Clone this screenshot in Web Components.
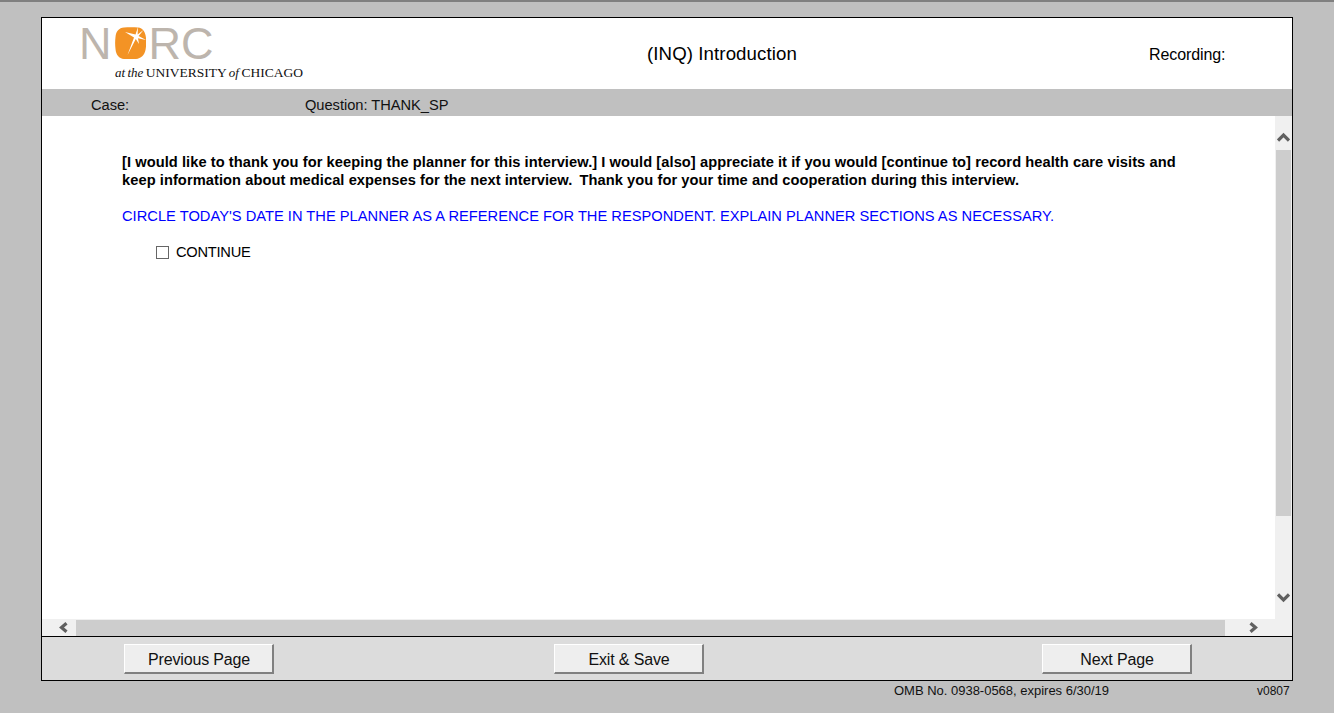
<!DOCTYPE html>
<html lang="en">
<head>
<meta charset="utf-8">
<title>(INQ) Introduction</title>
<style>
    html, body { margin: 0; height: 100%; }
    body {
        background: #c0c0c0;
        font-family: "Liberation Sans", Arial, sans-serif;
        color: #000;
        overflow: hidden;
    }
    .gap { display: inline-block; width: 3px; }
</style>
</head>
<body>
<survey-page>
    <survey-header slot="header" title-text="(INQ) Introduction" recording="Recording:"></survey-header>
    <info-bar slot="info" question="Question: THANK_SP"></info-bar>
    <scroll-pane slot="content">
        <question-text>[I would like to thank you for keeping the planner for this interview.] I would [also] appreciate it if you would [continue to] record health care visits and<br>keep information about medical expenses for the next interview. <span class="gap"></span>Thank you for your time and cooperation during this interview.</question-text>
        <interviewer-note>CIRCLE TODAY'S DATE IN THE PLANNER AS A REFERENCE FOR THE RESPONDENT. EXPLAIN PLANNER SECTIONS AS NECESSARY.</interviewer-note>
        <check-option>CONTINUE</check-option>
    </scroll-pane>
    <nav-footer slot="footer">
        <nav-button style="margin-left: 82px">Previous Page</nav-button>
        <nav-button style="margin-left: 280px">Exit &amp; Save</nav-button>
        <nav-button style="margin-left: 338px">Next Page</nav-button>
    </nav-footer>
    <span slot="omb">OMB No. 0938-0568, expires 6/30/19</span>
    <span slot="version">v0807</span>
</survey-page>

<script>
// page frame: grey backdrop, black bordered box, small print underneath
class SurveyPage extends HTMLElement {
    constructor() {
        super();
        this.attachShadow({ mode: 'open' });
    }

    connectedCallback() {
        this.shadowRoot.innerHTML = `
            <style>
                :host {
                    display: block;
                    height: 713px;
                    box-sizing: border-box;
                    border-top: 2px solid #808080;
                    padding: 15px 41px 0 41px;
                }
                .frame {
                    width: 1252px;
                    height: 664px;
                    box-sizing: border-box;
                    border: 1px solid #000;
                    display: flex;
                    flex-direction: column;
                    background: #fff;
                }
                .small {
                    display: flex;
                    padding-top: 3px;
                    color: #111;
                }
                .omb { margin-left: 853px; width: 363px; font-size: 13px; line-height: 14px; letter-spacing: -0.01px; }
                .ver { font-size: 12px; line-height: 14px; }
            </style>
            <div class="frame">
                <slot name="header"></slot>
                <slot name="info"></slot>
                <slot name="content"></slot>
                <slot name="footer"></slot>
            </div>
            <div class="small">
                <div class="omb"><slot name="omb"></slot></div>
                <div class="ver"><slot name="version"></slot></div>
            </div>
        `;
    }
}

class NorcLogo extends HTMLElement {
    constructor() {
        super();
        this.attachShadow({ mode: 'open' });
    }

    connectedCallback() {
        this.shadowRoot.innerHTML = `
            <style>
                :host { display: block; width: 240px; }
                .mark {
                    display: flex;
                    align-items: flex-start;
                    height: 34px;
                    margin-top: 1px;
                    padding-left: 37px;
                    font-family: "Liberation Sans", sans-serif;
                    font-size: 45px;
                    line-height: 34px;
                    color: #bdb5ad;
                }
                svg { display: block; width: 31px; height: 32px; margin: 0 3px; }
                .sub {
                    margin: 4px 0 0 73px;
                    font-family: "Liberation Serif", serif;
                    font-size: 13.5px;
                    line-height: 15px;
                    color: #111;
                    white-space: nowrap;
                    word-spacing: -0.9px;
                }
                .sub i { font-size: 13px; }
            </style>
            <div class="mark">
                <span>N</span>
                <svg viewBox="0 0 31 32" aria-hidden="true">
                    <path d="M9 0.5 C13 0 19 0 23 0.5 C28 1 30.5 5 31 11 C31.3 15 31.3 19 30.5 23 C29.5 28 26 31.5 21 32 C17 32.3 13 32.3 9 32 C4 31.5 1 28 0.5 22 C0 18 0 14 0.5 10 C1 4 4 1 9 0.5 Z" fill="#f39325"/>
                    <path d="M23 0 L22.6 7.5 L28.5 3 L23.6 9 L31 13 L23 11.3 L24 17 L20.8 12 L12.5 28 L19 10.5 L10 5 L20.5 7.5 Z" fill="#fff"/>
                </svg>
                <span>RC</span>
            </div>
            <div class="sub"><i>at the</i> UNIVERSITY <i>of</i> CHICAGO</div>
        `;
    }
}

class SurveyHeader extends HTMLElement {
    constructor() {
        super();
        this.attachShadow({ mode: 'open' });
    }

    connectedCallback() {
        const title = this.getAttribute('title-text');
        const recording = this.getAttribute('recording');
        this.shadowRoot.innerHTML = `
            <style>
                :host {
                    display: flex;
                    height: 71px;
                    box-sizing: border-box;
                    padding-top: 8px;
                    background: #fff;
                }
                norc-logo { flex: none; }
                .title {
                    width: 150px;
                    margin-left: 365px;
                    padding-top: 17px;
                    font-size: 18.67px;
                    letter-spacing: 0.09px;
                    line-height: 22px;
                    white-space: nowrap;
                }
                .rec {
                    margin-left: 352px;
                    padding-top: 20px;
                    font-size: 16px;
                    letter-spacing: -0.1px;
                    line-height: 18px;
                }
            </style>
            <norc-logo></norc-logo>
            <div class="title">${title}</div>
            <div class="rec">${recording}</div>
        `;
    }
}

class InfoBar extends HTMLElement {
    constructor() {
        super();
        this.attachShadow({ mode: 'open' });
    }

    connectedCallback() {
        this.shadowRoot.innerHTML = `
            <style>
                :host {
                    display: flex;
                    height: 27px;
                    box-sizing: border-box;
                    padding: 8px 0 0 49px;
                    background: #c0c0c0;
                    font-size: 14.67px;
                    letter-spacing: -0.03px;
                    line-height: 17px;
                    color: #111;
                }
                .case { width: 214px; }
            </style>
            <div class="case">Case:</div>
            <div>${this.getAttribute('question')}</div>
        `;
    }
}

// fake scrollbars, they are always drawn in the reference
class ScrollPane extends HTMLElement {
    constructor() {
        super();
        this.attachShadow({ mode: 'open' });
    }

    connectedCallback() {
        this.shadowRoot.innerHTML = `
            <style>
                :host {
                    display: grid;
                    grid-template-columns: 1233px 17px;
                    grid-template-rows: 503px 17px;
                    height: 520px;
                    background: #f0f0f0;
                }
                .body {
                    background: #fff;
                    padding: 37px 80px 0 80px;
                    box-sizing: border-box;
                    overflow: hidden;
                }
                .v {
                    grid-row: 1 / 3;
                    grid-column: 2;
                    position: relative;
                }
                .v .thumb {
                    margin: 34px 1px 0 1px;
                    height: 366px;
                    background: #cdcdcd;
                }
                .h {
                    display: flex;
                    box-sizing: border-box;
                    padding-top: 1px;
                    position: relative;
                }
                .h .thumb {
                    margin-left: 34px;
                    width: 1149px;
                    background: #cdcdcd;
                }
                svg { position: absolute; display: block; }
                .up { left: 2px; top: 16px; }
                .down { left: 2px; top: 477px; }
                .left { left: 16px; top: 3px; }
                .right { left: 1207px; top: 3px; }
            </style>
            <div class="body"><slot></slot></div>
            <div class="v">
                <div class="thumb"></div>
                <svg class="up" width="13" height="10" viewBox="0 0 13 10"><path d="M1 8.5 L6.5 3 L12 8.5" fill="none" stroke="#606060" stroke-width="3.2"/></svg>
                <svg class="down" width="13" height="10" viewBox="0 0 13 10"><path d="M1 1.5 L6.5 7 L12 1.5" fill="none" stroke="#606060" stroke-width="3.2"/></svg>
            </div>
            <div class="h">
                <div class="thumb"></div>
                <svg class="left" width="10" height="11" viewBox="0 0 10 11"><path d="M8.5 1.2 L3.5 5.5 L8.5 9.8" fill="none" stroke="#606060" stroke-width="3.2"/></svg>
                <svg class="right" width="10" height="11" viewBox="0 0 10 11"><path d="M1.5 1.2 L6.5 5.5 L1.5 9.8" fill="none" stroke="#606060" stroke-width="3.2"/></svg>
            </div>
        `;
    }
}

class QuestionText extends HTMLElement {
    constructor() {
        super();
        this.attachShadow({ mode: 'open' });
        this.shadowRoot.innerHTML = `
            <style>
                :host {
                    display: block;
                    font-size: 14.67px;
                    font-weight: bold;
                    letter-spacing: 0.06px;
                    line-height: 18px;
                    margin-bottom: 18px;
                }
            </style>
            <slot></slot>
        `;
    }
}

class InterviewerNote extends HTMLElement {
    constructor() {
        super();
        this.attachShadow({ mode: 'open' });
        this.shadowRoot.innerHTML = `
            <style>
                :host {
                    display: block;
                    font-size: 14.67px;
                    letter-spacing: 0.02px;
                    line-height: 18px;
                    color: #0000ff;
                    white-space: nowrap;
                    margin-bottom: 18px;
                }
            </style>
            <slot></slot>
        `;
    }
}

class CheckOption extends HTMLElement {
    constructor() {
        super();
        this.attachShadow({ mode: 'open' });
        this.shadowRoot.innerHTML = `
            <style>
                :host {
                    display: flex;
                    align-items: center;
                    height: 18px;
                    padding-left: 34px;
                    font-size: 14.67px;
                    letter-spacing: -0.25px;
                    line-height: 18px;
                }
                .box {
                    width: 13px;
                    height: 13px;
                    box-sizing: border-box;
                    border: 1px solid #666;
                    margin-right: 7px;
                    background: #fff;
                }
            </style>
            <span class="box"></span><slot></slot>
        `;
    }
}

class NavFooter extends HTMLElement {
    constructor() {
        super();
        this.attachShadow({ mode: 'open' });
        this.shadowRoot.innerHTML = `
            <style>
                :host {
                    display: flex;
                    align-items: flex-start;
                    box-sizing: border-box;
                    height: 44px;
                    border-top: 1px solid #000;
                    padding-top: 7px;
                    background: #dcdcdc;
                }
            </style>
            <slot></slot>
        `;
    }
}

class NavButton extends HTMLElement {
    constructor() {
        super();
        this.attachShadow({ mode: 'open' });
        this.shadowRoot.innerHTML = `
            <style>
                :host {
                    display: flex;
                    flex: none;
                    align-items: center;
                    justify-content: center;
                    box-sizing: border-box;
                    width: 150px;
                    height: 30px;
                    padding: 2px 0 0 1px;
                    background: #eeeeee;
                    border: 1px solid #fff;
                    border-right: 2px solid #808080;
                    border-bottom: 2px solid #808080;
                    font-size: 16px;
                    letter-spacing: -0.15px;
                    color: #111;
                    cursor: pointer;
                }
            </style>
            <slot></slot>
        `;
    }
}

customElements.define('survey-page', SurveyPage);
customElements.define('norc-logo', NorcLogo);
customElements.define('survey-header', SurveyHeader);
customElements.define('info-bar', InfoBar);
customElements.define('scroll-pane', ScrollPane);
customElements.define('question-text', QuestionText);
customElements.define('interviewer-note', InterviewerNote);
customElements.define('check-option', CheckOption);
customElements.define('nav-footer', NavFooter);
customElements.define('nav-button', NavButton);
</script>
</body>
</html>
